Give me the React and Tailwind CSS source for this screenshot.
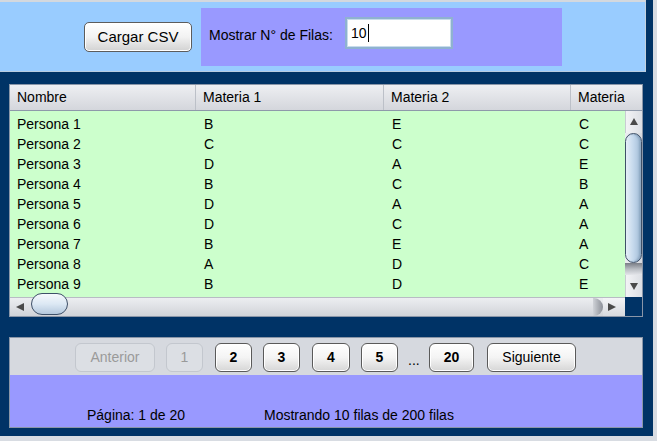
import React from "react";

const rows = [
  ["Persona 1", "B", "E", "C"],
  ["Persona 2", "C", "C", "C"],
  ["Persona 3", "D", "A", "E"],
  ["Persona 4", "B", "C", "B"],
  ["Persona 5", "D", "A", "A"],
  ["Persona 6", "D", "C", "A"],
  ["Persona 7", "B", "E", "A"],
  ["Persona 8", "A", "D", "C"],
  ["Persona 9", "B", "D", "E"],
];

function Tri({ dir, className }) {
  const pts = {
    up: "4,0 8,7 0,7",
    down: "0,0 8,0 4,7",
    left: "0,4 8,0 8,8",
    right: "0,0 8,4 0,8",
  }[dir];
  const box = dir === "up" || dir === "down" ? "0 0 8 7" : "0 0 8 8";
  const w = 8;
  const h = dir === "up" || dir === "down" ? 7 : 8;
  return (
    <svg width={w} height={h} viewBox={box} className={className}>
      <polygon points={pts} fill="#4a4a4a" />
    </svg>
  );
}

function PageBtn({ children, w, ml, bold, disabled }) {
  return (
    <div
      className={
        "h-[29px] flex items-center justify-center rounded-[6px] border text-[14px] " +
        (disabled
          ? "border-[#c3c7ce] bg-[#dcdfe4] text-[#9a9a9a] "
          : "border-[#5a5a5a] bg-linear-to-b from-[#ffffff] via-[#f4f4f4] to-[#d6d6d6] text-black shadow-[inset_0_0_0_1px_#ffffff] ") +
        (bold ? "font-bold " : "")
      }
      style={{ width: w, marginLeft: ml }}
    >
      {children}
    </div>
  );
}

export default function App() {
  return (
    <div
      className="w-[657px] h-[441px] bg-[#d8dce2] overflow-hidden text-[14px] text-black"
      style={{ fontFamily: '"Liberation Sans", Arial, sans-serif' }}
    >
      <div className="w-[653px] h-[436px] bg-[#003366] flex flex-col">
        {/* Top panel */}
        <div className="w-[646px] h-[72px] bg-[#99ccff] border-t-2 border-t-[#d4d8de] border-r border-r-[#c4d0dc] border-b border-b-[#b8cce0] flex items-start">
          <div className="ml-[84px] mt-[20px] w-[108px] h-[30px] rounded-[5px] border border-[#5c5c5c] bg-linear-to-b from-[#ffffff] via-[#f2f2f2] to-[#d2d2d2] shadow-[inset_0_0_0_1px_#ffffff] flex items-center justify-center text-[15px]">
            Cargar CSV
          </div>
          <div className="ml-[9px] mt-[6px] w-[361px] h-[58px] bg-[#9999ff] flex items-start">
            <div className="ml-[8px] mt-[17px] w-[136px] leading-[20px] text-[14px] whitespace-nowrap">
              Mostrar N° de Filas:
            </div>
            <div className="mt-[9px] w-[108px] h-[32px] bg-white border-2 border-[#8fb2d0] shadow-[inset_0_0_0_1px_#c8dcec] flex items-center pl-[4px] text-[14px]">
              <span>10</span>
              <span className="w-[1px] h-[18px] bg-black ml-[1px]" />
            </div>
          </div>
        </div>

        {/* Table */}
        <div className="ml-[9px] mt-[12px] w-[634px] h-[233px] border border-[#8a96a8] bg-[#e6e8ec] flex flex-col">
          {/* Header */}
          <div className="h-[26px] flex border-b border-b-[#8e99aa] bg-linear-to-b from-[#eeeff2] to-[#d4d6dc]">
            <div className="w-[186px] pl-[7px] flex items-center border-r border-r-[#bcc0c8]">Nombre</div>
            <div className="w-[188px] pl-[7px] flex items-center border-r border-r-[#bcc0c8]">Materia 1</div>
            <div className="w-[187px] pl-[7px] flex items-center border-r border-r-[#bcc0c8]">Materia 2</div>
            <div className="w-[54px] pl-[7px] flex items-center overflow-hidden whitespace-nowrap">Materia 3</div>
            <div className="flex-1" />
          </div>
          {/* Body */}
          <div className="h-[186px] flex">
            <div className="w-[615px] h-[186px] bg-[#ccffcc] overflow-hidden pt-[3px]">
              {rows.map((r) => (
                <div key={r[0]} className="h-[20px] flex items-center whitespace-nowrap">
                  <div className="w-[186px] pl-[7px]">{r[0]}</div>
                  <div className="w-[188px] pl-[8px]">{r[1]}</div>
                  <div className="w-[187px] pl-[8px]">{r[2]}</div>
                  <div className="w-[54px] pl-[8px]">{r[3]}</div>
                </div>
              ))}
            </div>
            {/* Vertical scrollbar */}
            <div className="w-[17px] h-[186px] flex flex-col bg-linear-to-r from-[#eceef1] to-[#d6d9de]">
              <div className="h-[22px] flex items-start justify-center pt-[7px] bg-linear-to-r from-[#f2f3f5] to-[#dcdfe4] border-l border-l-[#c8ccd2]">
                <Tri dir="up" />
              </div>
              <div className="h-[130px] rounded-t-[9px] rounded-b-[9px] border border-[#3e5068] bg-linear-to-r from-[#e6eff8] via-[#c4d8ec] to-[#a2bcd6] shadow-[inset_-2px_0_2px_#8ea8c2]" />
              <div className="h-[12px] bg-linear-to-b from-[#7a7e86] via-[#b8bcc2] to-[#e4e6ea]" />
              <div className="flex-1" />
              <div className="h-[22px] flex items-start justify-center pt-[8px] border-l border-l-[#c8ccd2] bg-linear-to-r from-[#f2f3f5] to-[#dcdfe4]">
                <Tri dir="down" />
              </div>
            </div>
          </div>
          {/* Horizontal scrollbar */}
          <div className="h-[19px] flex">
            <div className="relative w-[615px] h-[19px] flex items-center bg-linear-to-b from-[#eceef1] via-[#dfe1e5] to-[#d0d3d8] border-t border-t-[#b8bcc4]">
              <div className="w-[21px] h-full flex items-center pl-[6px]">
                <Tri dir="left" />
              </div>
              <div className="absolute left-[21px] top-[-5px] w-[37px] h-[22px] rounded-full border border-[#3e5068] bg-linear-to-b from-[#f6f9fc] via-[#dce8f4] to-[#b4c8dc]" />
              <div className="flex-1" />
              <div className="w-[10px] h-full rounded-r-[10px] bg-linear-to-r from-[#d0d3d8] to-[#8c9098]" />
              <div className="w-[22px] h-full flex items-center pl-[5px] bg-linear-to-b from-[#f4f5f7] to-[#d6d9de]">
                <Tri dir="right" />
              </div>
            </div>
            <div className="w-[17px] h-[19px] bg-[#003366]" />
          </div>
        </div>

        {/* Bottom panel */}
        <div className="ml-[9px] mt-[20px] w-[634px] h-[91px] border border-[#8a96a8] flex flex-col">
          <div className="h-[37px] bg-[#d6d9df] flex items-start pt-[5px]">
            <PageBtn w={80} ml={65} disabled>Anterior</PageBtn>
            <PageBtn w={37} ml={11} disabled>1</PageBtn>
            <PageBtn w={37} ml={12} bold>2</PageBtn>
            <PageBtn w={37} ml={11} bold>3</PageBtn>
            <PageBtn w={38} ml={12} bold>4</PageBtn>
            <PageBtn w={37} ml={11} bold>5</PageBtn>
            <div className="ml-[10px] w-[12px] h-[29px] flex items-end pb-[5px] text-[14px] leading-[14px]">...</div>
            <PageBtn w={45} ml={9} bold>20</PageBtn>
            <PageBtn w={89} ml={13}>Siguiente</PageBtn>
          </div>
          <div className="flex-1 bg-[#9999ff] flex items-start pt-[30px] leading-[20px] whitespace-nowrap">
            <div className="ml-[77px] w-[177px]">Página: 1 de 20</div>
            <div>Mostrando 10 filas de 200 filas</div>
          </div>
        </div>
      </div>
    </div>
  );
}
